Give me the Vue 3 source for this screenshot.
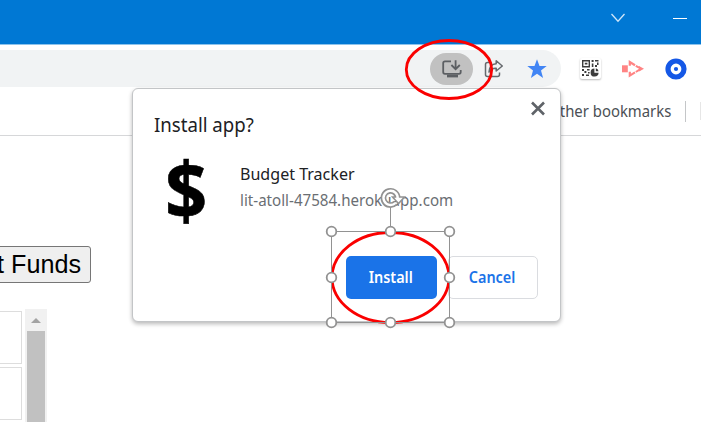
<script setup>
const rows = [1, 2]
const handles = [
  [331.5, 231.5], [390.5, 231.5], [449.5, 231.5],
  [331.5, 277.5], [449.5, 277.5],
  [331.5, 322.5], [390.5, 322.5], [449.5, 322.5],
]
</script>

<template>
  <div class="window">
    <header class="titlebar">
      <svg class="chevron" width="16" height="10" viewBox="0 0 16 10"><path d="M1.5 1 8 8.2 14.5 1" fill="none" stroke="#cfe6f8" stroke-width="1.3" /></svg>
      <span class="minimize"></span>
    </header>

    <div class="toolbar">
      <div class="address">
        <span class="install-chip">
          <svg width="20" height="20" viewBox="0 0 20 20" fill="none" stroke="#5c5f63" stroke-width="1.8">
            <path d="M9 2.3H3Q1.2 2.3 1.2 4V13Q1.2 14.8 3 14.8H17Q18.7 14.8 18.7 13V11" />
            <path d="M13.6 1.2V9.5M9.4 6 13.6 10.2 17.8 6" />
            <path d="M5 17H16" stroke-width="2.8" />
          </svg>
        </span>
        <svg class="share" width="20" height="20" viewBox="0 0 20 20" fill="none" stroke="#66696d" stroke-width="1.5">
          <path d="M6.5 3.5H3.5Q1.5 3.5 1.5 5.5V15.5Q1.5 17.5 3.5 17.5H13.5Q15.5 17.5 15.5 15.5V13.5" />
          <path d="M12.2 1.8 18.3 7 12.2 12V9.3Q7.4 9 5 13Q5.5 5.2 12.2 4.8Z" stroke-linejoin="round" />
        </svg>
        <svg class="star" width="20" height="20" viewBox="0 0 20 20"><path fill="#4285f4" d="M10 .3 12.5 7H19.7L14 11.6 16.1 19 10 14.8 3.9 19 6 11.6.3 7H7.5Z" /></svg>
      </div>
      <div class="extensions">
        <span class="qr">
          <svg width="17" height="17" viewBox="0 0 17 17" fill="#3c3c3c">
            <path fill-rule="evenodd" d="M0 0H8V7.5H0ZM1.4 1.4V6.1H6.6V1.4Z" />
            <path d="M2.8 2.8H5.4V4.6H2.8ZM9.6 0H11.6V2H9.6ZM13 0H16.5V1.6H13ZM9.8 3.6H11.4V7H9.8ZM15 2.4H16.5V5H15ZM13 5H15V7H13ZM0 9H2V11H0ZM2.4 11H4.4V13H2.4ZM5 9H7.6V10.6H5ZM0 14H2V16H0ZM4 14.4H7V16H4ZM6 12H7.6V13.4H6Z" />
            <path d="M12.4 8.6A4 4 0 1 0 16.6 12.8H12.4Z" /><path d="M13.8 8.2A4 4 0 0 1 16.6 11.2H13.8Z" />
          </svg>
        </span>
        <svg class="cast" width="22" height="20" viewBox="0 0 22 20">
          <path fill="#ff8484" d="M0 6.3H5.8V13.3H0Z" />
          <path d="M7.8 6.8V3L13 6.2M7.8 12.8V16.6L13 13.4" fill="none" stroke="#ff8484" stroke-width="2.2" />
          <path d="M13.8 6.8 18 9.2V10.4L13.8 13" fill="none" stroke="#ff8484" stroke-width="2" />
          <path fill="#ff8484" d="M17 7 22 9.8 17 12.6Z" />
        </svg>
        <svg class="target" width="22" height="22" viewBox="0 0 22 22">
          <circle cx="11" cy="11" r="8" fill="#fff" stroke="#1558e6" stroke-width="5.2" />
          <circle cx="11" cy="11" r="2.1" fill="#1558e6" />
        </svg>
      </div>
    </div>

    <div class="bookmarks">
      <span class="bookmark-label">Other bookmarks</span>
      <span class="divider"></span>
      <span class="next-item"></span>
    </div>

    <main class="page">
      <button class="funds">t Funds</button>
      <div class="list">
        <div class="rows"><div v-for="row in rows" :key="row" class="row"></div></div>
        <div class="scrollbar"><span class="arrow"></span><span class="thumb"></span></div>
      </div>
    </main>

    <section class="dialog">
      <div class="dialog-head">
        <h1>Install app?</h1>
        <svg class="close" width="16" height="16" viewBox="0 0 16 16"><path d="M2 1.5 14 13.5M14 1.5 2 13.5" stroke="#5f6368" stroke-width="2.6" /></svg>
      </div>
      <div class="app">
        <span class="dollar">$</span>
        <div class="info">
          <div class="name">Budget Tracker</div>
          <div class="url">lit-atoll-47584.herokuapp.com</div>
        </div>
      </div>
      <div class="actions">
        <button class="install"><span>Install</span></button>
        <button class="cancel"><span>Cancel</span></button>
      </div>
    </section>

    <svg class="annotations" width="701" height="422" viewBox="0 0 701 422" fill="none">
      <ellipse cx="449" cy="69.5" rx="42.7" ry="29" stroke="#fa0000" stroke-width="2.8" />
      <ellipse cx="390.5" cy="277.5" rx="58.5" ry="45" stroke="#fa0000" stroke-width="2.8" />
      <g stroke="#929292">
        <rect x="331.5" y="231.5" width="118" height="91" />
        <path d="M390.5 207V231" />
        <circle v-for="([x, y], i) in handles" :key="i" :cx="x" :cy="y" r="4.8" fill="#fff" stroke-width="1.8" />
      </g>
      <path d="M397.6 198A7.1 7.1 0 1 0 395.5 203" stroke="#929292" stroke-width="5.8" />
      <path d="M392.5 197H404.5L398.5 203.6Z" fill="#fff" stroke="#929292" stroke-width="1.5" />
      <path d="M397.6 199A7.1 7.1 0 1 0 395.5 203" stroke="#fff" stroke-width="2.4" />
    </svg>
  </div>
</template>

<style>
body { margin: 0; background: #fff; }
</style>

<style scoped>
.window { position: relative; width: 701px; height: 422px; overflow: hidden; background: #fff; font-family: "Noto Sans", "Open Sans", sans-serif; }
.titlebar { box-sizing: border-box; height: 45px; background: #0078d4; border-bottom: 1px solid #8cc3ec; display: flex; justify-content: flex-end; align-items: flex-start; gap: 47px; padding: 13px 14px 0 0; }
.minimize { width: 14px; height: 1px; margin-top: 5px; background: #fff; }
.toolbar { display: flex; height: 42px; padding-top: 5px; box-sizing: border-box; }
.address { box-sizing: border-box; width: 561px; height: 37px; background: #f1f3f4; border-radius: 0 19px 19px 0; display: flex; align-items: center; justify-content: flex-end; padding-right: 14px; }
.install-chip { width: 43px; height: 32px; border-radius: 16px; background: #c1c1c1; display: flex; align-items: center; justify-content: center; margin-right: 11px; }
.share { margin-right: 23px; }
.extensions { display: flex; align-items: center; height: 37px; padding-left: 19px; }
.qr { width: 21px; height: 21px; background: #fff; border-radius: 2px; box-shadow: 0 1px 2px #bbb; display: flex; align-items: center; justify-content: center; }
.cast { margin-left: 21px; }
.target { margin-left: 21px; }
.bookmarks { box-sizing: border-box; height: 49px; border-bottom: 1px solid #d6d7d9; display: flex; justify-content: flex-end; align-items: center; }
.bookmark-label { font-size: 15.5px; color: #4b4f55; white-space: nowrap; line-height: 20px; transform: scaleX(.96); transform-origin: right; }
.divider { width: 1px; height: 21px; background: #c4c6c8; margin-left: 14px; }
.next-item { width: 1px; height: 18px; background: #e6e6e6; margin-left: 14px; }
.page { display: flex; flex-direction: column; align-items: flex-start; padding-top: 110px; }
.funds { width: 101px; height: 37px; margin-left: -10px; box-sizing: border-box; background: #efefef; border: 1.5px solid #767676; border-radius: 3px; padding: 0 9px 2px 0; text-align: right; white-space: nowrap; font: 25.2px "Liberation Sans", sans-serif; color: #000; line-height: 32px; }
.list { display: flex; margin-top: 26px; height: 113px; }
.rows { width: 22px; padding-top: 2px; display: flex; flex-direction: column; gap: 3px; }
.row { flex: none; height: 53px; box-sizing: border-box; border: 1.5px solid #ddd; border-left: 0; }
.scrollbar { width: 22px; margin-left: 3px; background: #f1f1f1; display: flex; flex-direction: column; align-items: center; }
.arrow { border: 5px solid transparent; border-top: 0; border-bottom-color: #a3a3a3; margin: 9px 0 8px; }
.thumb { width: 18px; flex: 1; background: #c1c1c1; }
.dialog { position: absolute; left: 132px; top: 88px; width: 429px; height: 234px; box-sizing: border-box; border: 1px solid #c3c5c7; border-radius: 6px; background: #fff; box-shadow: 0 2px 4px rgba(0, 0, 0, .28); display: flex; flex-direction: column; }
.dialog-head { display: flex; justify-content: space-between; padding: 12px 14px 0 21px; height: 59px; box-sizing: border-box; }
h1 { margin: 10px 0 0; font-size: 19.5px; font-weight: 400; line-height: 27px; color: #202124; transform: scaleX(.955); transform-origin: left; }
.app { display: flex; height: 94px; }
.dollar { width: 86px; margin-left: 20px; font-size: 78px; font-weight: 700; line-height: 82px; padding-left: 12px; box-sizing: border-box; color: #000; transform: scaleX(.95); transform-origin: 10px; -webkit-text-stroke: .5px #000; }
.info { padding-top: 13px; white-space: nowrap; padding-left: 1px; }
.name { font-size: 17px; line-height: 25px; color: #202124; transform: scaleX(.945); transform-origin: left; }
.url { font-size: 15.8px; line-height: 26px; color: #6a6e73; transform: scaleX(.957); transform-origin: left; margin-top: 1px; }
.actions { display: flex; gap: 11px; justify-content: flex-end; padding: 14px 22px 0 0; }
.actions button { height: 43px; box-sizing: border-box; padding: 0 2px 1px 0; border-radius: 5px; font: 600 15.5px "Noto Sans", sans-serif; }
.actions span { display: inline-block; transform: scaleX(.93); }
.install { width: 91px; color: #fff; background: #1a73e8; border: 0; }
.cancel { width: 90px; color: #1a73e8; background: #fff; border: 1px solid #dadce0; }
.annotations { position: absolute; left: 0; top: 0; }
</style>
